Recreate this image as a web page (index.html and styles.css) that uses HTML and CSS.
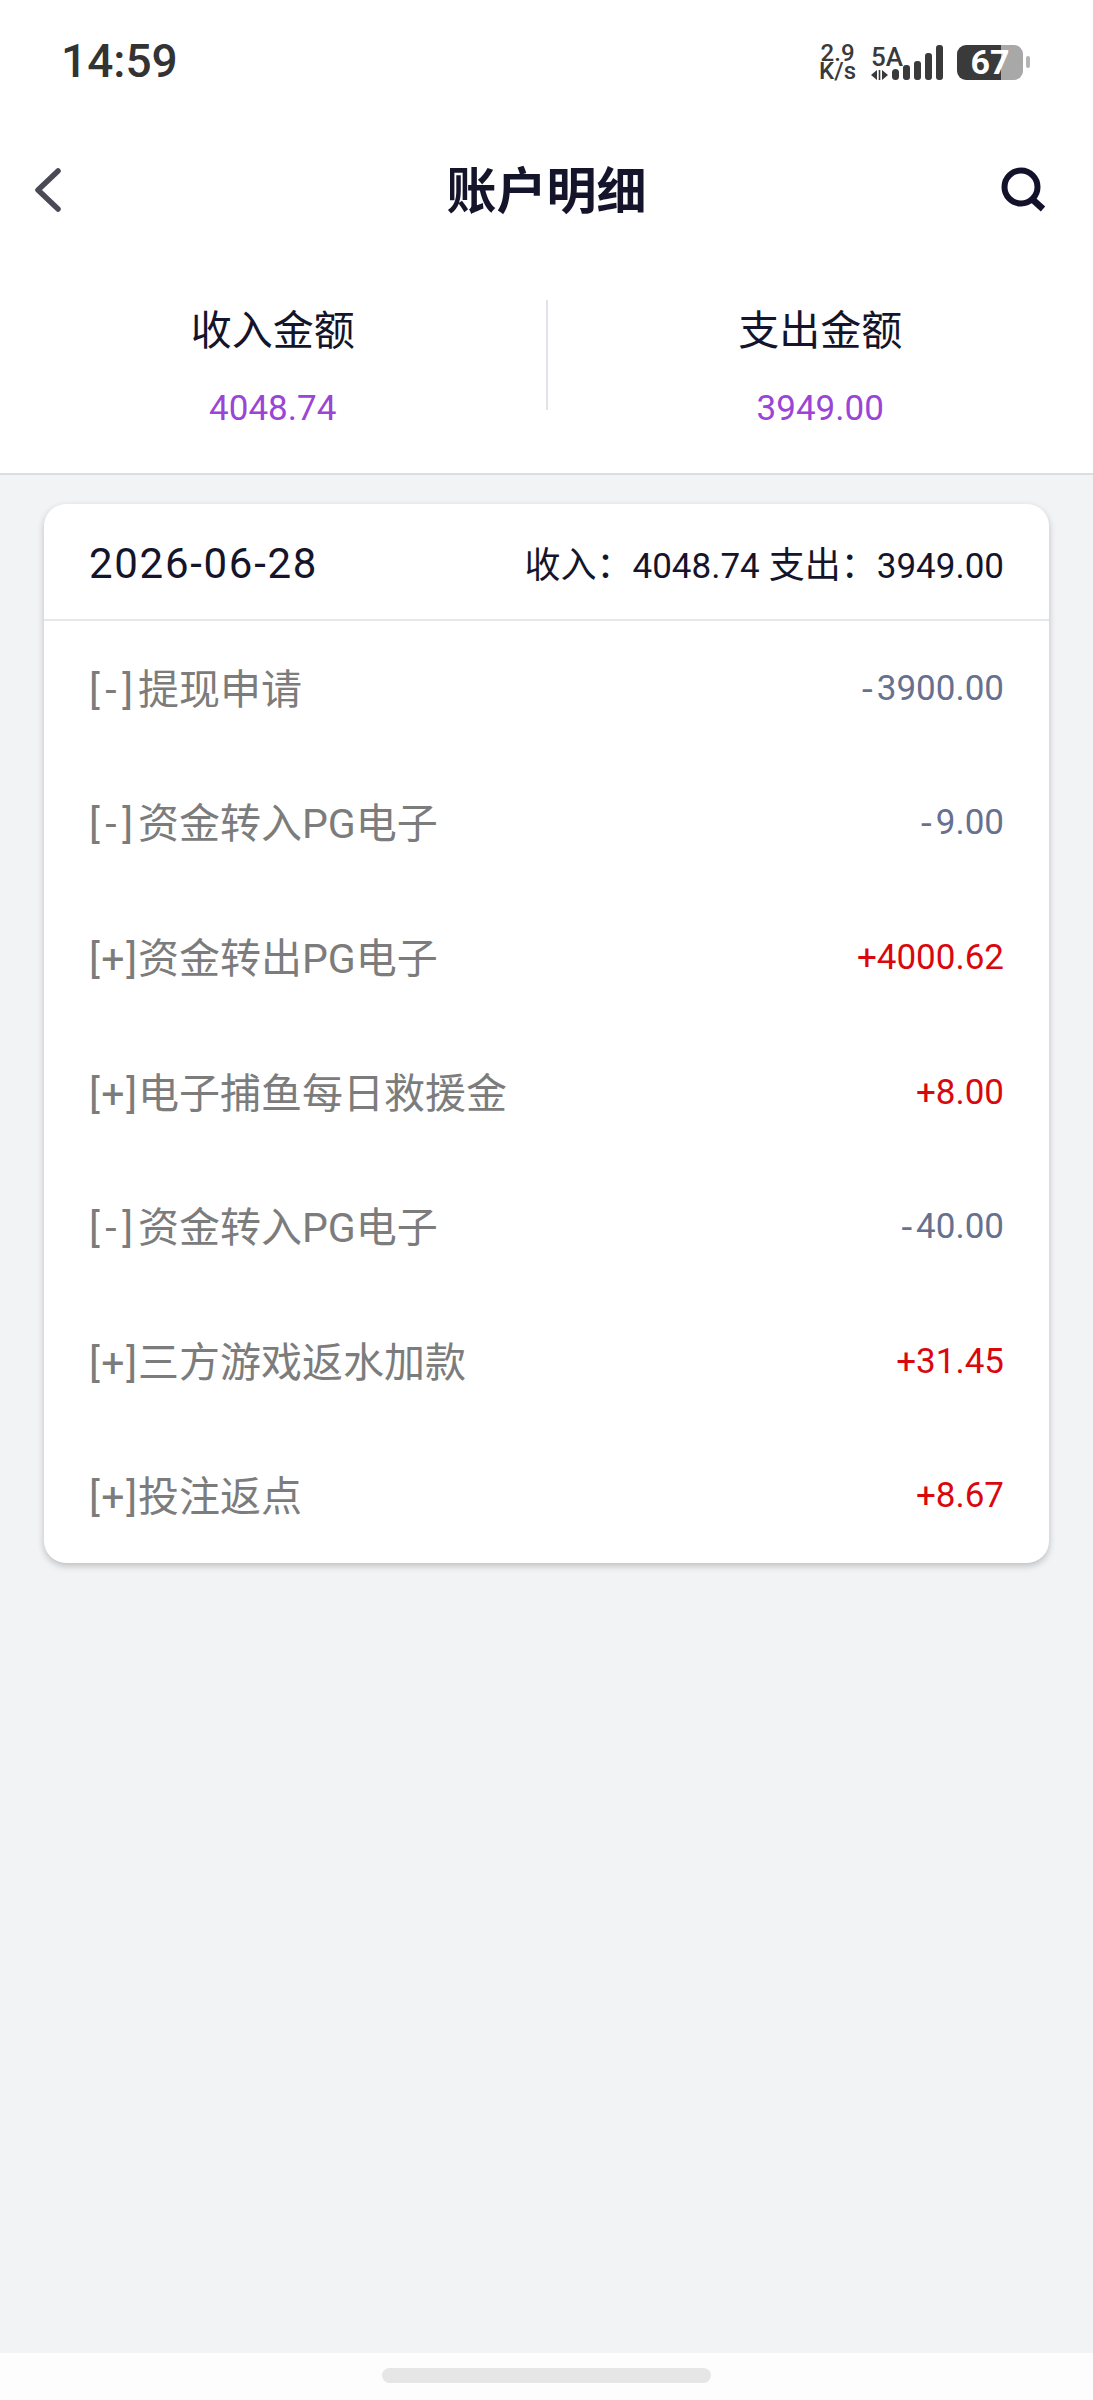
FILE: index.html
```html
<!DOCTYPE html>
<html lang="zh-CN">

<head>
    <meta charset="UTF-8" />
    <meta name="viewport" content="width=device-width, initial-scale=1.0" />
    <title>账户明细</title>
    <link rel="stylesheet" href="styles.css">
</head>

<body>
    <div class="top">
        <div class="status">
            <div class="time">14:59</div>
            <div class="status-right">
                <div class="speed">2.9<br>K/s</div>
                <div class="net">
                    <div class="net-label">5A</div>
                    <svg class="net-arrows" width="17" height="10" viewBox="0 0 17 10">
                        <path d="M0 5 6 0V10ZM11 0 17 5 11 10Z" fill="#3a3a3a" />
                        <path d="M7.7 0H9.3V10H7.7Z" fill="#3a3a3a" />
                    </svg>
                </div>
                <svg class="signal" width="51" height="35" viewBox="0 0 51 35">
                    <rect x="0" y="24" width="7" height="11" rx="3.5" />
                    <rect x="11" y="20" width="7" height="15" rx="3" />
                    <rect x="22" y="16" width="7" height="19" rx="3" />
                    <rect x="33" y="8" width="7" height="27" rx="3" />
                    <rect x="44" y="0" width="7" height="35" rx="3" />
                </svg>
                <div class="battery">67</div>
                <div class="battery-tip"></div>
            </div>
        </div>
        <div class="nav">
            <svg width="28" height="44" viewBox="0 0 28 44" fill="none">
                <path d="M24 3 4 22 24 41" stroke="#4a4a56" stroke-width="5.5" stroke-linecap="round" stroke-linejoin="round" />
            </svg>
            <h1>账户明细</h1>
            <svg width="46" height="46" viewBox="0 0 46 46" fill="none">
                <circle cx="21" cy="20" r="16.5" stroke="#12122b" stroke-width="6" />
                <path d="M32 32 43 42" stroke="#12122b" stroke-width="6.5" />
            </svg>
        </div>
        <div class="summary">
            <div class="sum-col">
                <div class="sum-label">收入金额</div>
                <div class="sum-value">4048.74</div>
            </div>
            <div class="sum-line"></div>
            <div class="sum-col">
                <div class="sum-label">支出金额</div>
                <div class="sum-value">3949.00</div>
            </div>
        </div>
    </div>

    <div class="card">
        <div class="card-head">
            <div class="date">2026-06-28</div>
            <div class="totals">收入：<span>4048.74</span> 支出：<span>3949.00</span></div>
        </div>
        <ul class="list">
            <li class="item"><span class="name"><span class="tag minus">[-]</span>提现申请</span><span class="out">-3900.00</span></li>
            <li class="item"><span class="name"><span class="tag minus">[-]</span>资金转入PG电子</span><span class="out">-9.00</span></li>
            <li class="item"><span class="name"><span class="tag">[+]</span>资金转出PG电子</span><span class="in">+4000.62</span></li>
            <li class="item"><span class="name"><span class="tag">[+]</span>电子捕鱼每日救援金</span><span class="in">+8.00</span></li>
            <li class="item"><span class="name"><span class="tag minus">[-]</span>资金转入PG电子</span><span class="out">-40.00</span></li>
            <li class="item"><span class="name"><span class="tag">[+]</span>三方游戏返水加款</span><span class="in">+31.45</span></li>
            <li class="item"><span class="name"><span class="tag">[+]</span>投注返点</span><span class="in">+8.67</span></li>
        </ul>
    </div>

    <div class="home-bar">
        <div class="home-pill"></div>
    </div>
</body>

</html>
```
FILE: styles.css
```css
* {
    box-sizing: border-box;
}

body {
    font-family: Roboto, "Noto Sans CJK SC", sans-serif;
    margin: 0;
    height: 2400px;
    display: flex;
    flex-direction: column;
    background: #f2f3f5;
    color: #14142b;
}

.top {
    background: #fff;
    border-bottom: 2px solid #dcdde3;
    height: 475px;
}

.status {
    height: 124px;
    display: flex;
    justify-content: space-between;
    align-items: flex-start;
    padding: 38px 63px 0 61px;
}

.time {
    font-size: 46px;
    line-height: 46px;
    font-weight: 500;
    color: #333;
}

.status-right {
    display: flex;
    align-items: flex-end;
    padding-top: 6px;
    color: #3a3a3a;
}

.speed {
    font-size: 24px;
    line-height: 18px;
    font-weight: 500;
    text-align: center;
    margin-right: 15px;
}

.net {
    width: 21px;
}

.net-label {
    font-size: 26px;
    line-height: 22px;
    font-weight: 500;
    margin-bottom: 2px;
}

.net-arrows {
    display: block;
}

.signal {
    fill: #3a3a3a;
    margin-right: 14px;
}

.battery {
    width: 66px;
    height: 35px;
    border-radius: 9px;
    background: linear-gradient(to right, #3a3a3a 67%, #a8a8a8 67%);
    color: #fff;
    font-size: 34px;
    line-height: 35px;
    font-weight: 700;
    text-align: center;
}

.battery-tip {
    width: 4px;
    height: 12px;
    border-radius: 2px;
    background: #b4b4b4;
    margin: 0 0 12px 3px;
}

.nav {
    height: 132px;
    display: flex;
    justify-content: space-between;
    align-items: center;
    padding: 0 47px 0 34px;
    position: relative;
}

h1 {
    position: absolute;
    left: 0;
    right: 0;
    margin: 0;
    padding-bottom: 6px;
    text-align: center;
    font-size: 50px;
    font-weight: 700;
}

.summary {
    display: flex;
    align-items: flex-start;
    padding-top: 44px;
}

.sum-col {
    flex: 1;
    text-align: center;
}

.sum-label {
    font-size: 41px;
    line-height: 56px;
    padding-top: 3px;
}

.sum-value {
    font-size: 35px;
    line-height: 44px;
    margin-top: 28px;
    color: #9a45d6;
}

.sum-line {
    width: 2px;
    height: 110px;
    background: #e2e3e8;
}

.card {
    margin: 29px 44px 0;
    background: #fff;
    border-radius: 22px;
    box-shadow: 0 3px 7px rgba(0, 0, 0, 0.22);
}

.card-head {
    height: 117px;
    display: flex;
    justify-content: space-between;
    align-items: center;
    padding: 0 45px;
    border-bottom: 2px solid #e6e7ea;
}

.date {
    font-size: 42px;
    letter-spacing: 1.7px;
    margin-top: 3px;
}

.totals {
    font-size: 36px;
}

.totals span {
    font-size: 35px;
}

.list {
    list-style: none;
    margin: 0;
    padding: 0;
}

.item {
    height: 134.6px;
    display: flex;
    justify-content: space-between;
    align-items: center;
    padding: 0 45px;
    font-size: 41px;
    color: #7c7c7c;
}

.name {
    padding-bottom: 5px;
}

.tag {
    display: inline-block;
    width: 49px;
    letter-spacing: 1.5px;
}

.tag.minus {
    letter-spacing: 5.5px;
}

.item .out,
.item .in {
    font-size: 35px;
}

.out {
    color: #66708f;
}

.out::first-letter {
    font-family: "DejaVu Sans", sans-serif;
    letter-spacing: 3px;
}

.in {
    color: #d9080f;
}

.home-bar {
    margin-top: auto;
    height: 47px;
    background: #fdfdfd;
    display: flex;
    justify-content: center;
    padding-top: 15px;
}

.home-pill {
    width: 329px;
    height: 15px;
    border-radius: 8px;
    background: #e6e6e6;
}
```
